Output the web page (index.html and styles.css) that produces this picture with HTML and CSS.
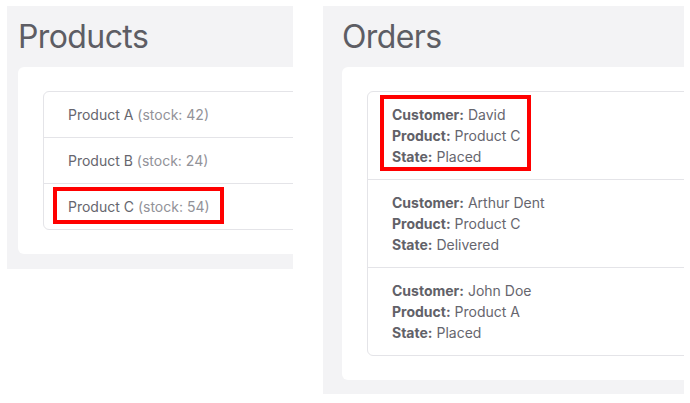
FILE: index.html
```html
<!DOCTYPE html>
<html lang="en">
<head>
<meta charset="utf-8">
<title>Products and Orders</title>
<link rel="stylesheet" href="styles.css">
</head>
<body>
<div class="page">
  <section class="panel panel-products">
    <h1 class="title">Products</h1>
    <div class="card">
      <ul class="list">
        <li class="row">Product A <span class="muted">(stock: 42)</span></li>
        <li class="row">Product B <span class="muted">(stock: 24)</span></li>
        <li class="row">Product C <span class="muted">(stock: 54)</span><span class="mark mark-product"></span></li>
      </ul>
    </div>
  </section>
  <section class="panel panel-orders">
    <h1 class="title">Orders</h1>
    <div class="card">
      <ul class="list">
        <li class="row">
          <div><b>Customer:</b> David</div>
          <div><b>Product:</b> Product C</div>
          <div><b>State:</b> Placed</div>
          <span class="mark mark-order"></span>
        </li>
        <li class="row">
          <div><b>Customer:</b> Arthur Dent</div>
          <div><b>Product:</b> Product C</div>
          <div><b>State:</b> Delivered</div>
        </li>
        <li class="row">
          <div><b>Customer:</b> John Doe</div>
          <div><b>Product:</b> Product A</div>
          <div><b>State:</b> Placed</div>
        </li>
      </ul>
    </div>
  </section>
</div>
</body>
</html>
```
FILE: styles.css
```css
html, body {
  margin: 0;
  padding: 0;
  background: #ffffff;
}
body {
  font-family: Inter, "Noto Sans", sans-serif;
  color: #66666e;
  font-size: 14px;
  line-height: 21px;
}
.page {
  display: flex;
  align-items: flex-start;
  gap: 30px;
  padding: 6px 0 0 7px;
}
.panel {
  background: #f3f3f5;
  overflow: hidden;
  box-sizing: border-box;
}
.panel-products {
  width: 286px;
  padding: 11px 0 15px 11px;
}
.panel-orders {
  width: 361px;
  padding: 11px 0 14px 19px;
}
.title {
  margin: 0 0 11px;
  font-size: 32px;
  line-height: 39px;
  font-weight: 400;
  letter-spacing: -0.6px;
  color: #5d5d64;
}
.card {
  background: #ffffff;
  border-radius: 6px;
  padding: 24px 0 24px 25px;
  margin-right: -80px;
}
.list {
  list-style: none;
  margin: 0 -80px 0 0;
  padding: 0;
  border: 1px solid #e4e4e8;
  border-radius: 6px;
}
.row {
  position: relative;
  padding: 12px 24px;
  border-top: 1px solid #e4e4e8;
}
.row:first-child {
  border-top: none;
}
.muted {
  color: #929298;
}
b {
  font-weight: 700;
  color: #616168;
}
.mark {
  position: absolute;
  border: 4px solid #ff0000;
  box-sizing: border-box;
}
.mark-product {
  left: 9px;
  top: 3px;
  width: 171px;
  height: 37px;
}
.mark-order {
  left: 12px;
  top: 3px;
  width: 151px;
  height: 76px;
}
```
